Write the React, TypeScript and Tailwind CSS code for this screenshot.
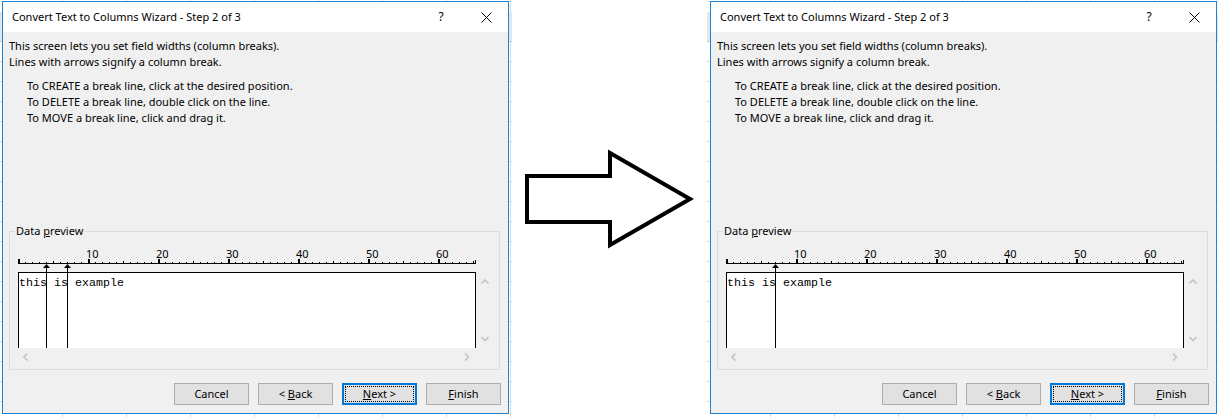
import React from "react";

const UI = "font-['Segoe_UI','Noto_Sans',sans-serif]";
const MONO = "font-['Courier_New','Liberation_Mono',monospace]";

// light spreadsheet grid peeking out around each dialog screenshot
const GRID_LEFT =
  "bg-[image:linear-gradient(to_bottom,transparent_12px,#e6e6e6_12px,#e6e6e6_41px,#c8c8c8_41px,#c8c8c8_42px,transparent_42px),repeating-linear-gradient(to_bottom,transparent_0px,transparent_1px,#d9d9d9_1px,#d9d9d9_2px,transparent_2px,transparent_20px),repeating-linear-gradient(to_right,transparent_0px,transparent_62px,#d9d9d9_62px,#d9d9d9_63px,transparent_63px,transparent_64px)]";
const GRID_RIGHT =
  "bg-[image:linear-gradient(to_bottom,transparent_12px,#e6e6e6_12px,#e6e6e6_41px,#c8c8c8_41px,#c8c8c8_42px,transparent_42px),repeating-linear-gradient(to_bottom,transparent_0px,transparent_1px,#d9d9d9_1px,#d9d9d9_2px,transparent_2px,transparent_20px),repeating-linear-gradient(to_right,transparent_0px,transparent_63px,#d9d9d9_63px,#d9d9d9_64px)]";

const CHAR_W = 7;
const RULER_CHARS = 65;

function Chevron({ dir }: { dir: "left" | "right" | "up" | "down" }) {
  const pts = {
    left: "4.5,0.5 1,4 4.5,7.5",
    right: "1,0.5 4.5,4 1,7.5",
    up: "0.5,4.5 4,1 7.5,4.5",
    down: "0.5,1 4,4.5 7.5,1",
  }[dir];
  const horiz = dir === "left" || dir === "right";
  return (
    <svg width={horiz ? 6 : 8} height={horiz ? 8 : 6} className="block">
      <polyline points={pts} fill="none" stroke="#c4c4c4" strokeWidth="1.6" />
    </svg>
  );
}

function Ruler({ breaks }: { breaks: number[] }) {
  const ticks = [];
  for (let i = 0; i <= RULER_CHARS; i++) {
    const x = i * CHAR_W;
    if (i % 10 === 0) ticks.push(<rect key={i} x={x} y={27} width={2} height={4} fill="#000" />);
    else if (i % 5 === 0) ticks.push(<rect key={i} x={x} y={29} width={1} height={2} fill="#000" />);
    else ticks.push(<rect key={i} x={x} y={30} width={1} height={1} fill="#000" />);
  }
  return (
    <svg width={460} height={40} className="ml-[8px] block">
      <rect x={0} y={31} width={458} height={1} fill="#000" />
      {ticks}
      <rect x={457} y={28} width={1} height={3} fill="#000" />
      {[10, 20, 30, 40, 50, 60].map((n) => (
        <text
          key={n}
          x={n * CHAR_W - 2}
          y={26}
          fontSize="11"
          fontFamily="'Segoe UI','Noto Sans',sans-serif"
          fill="#000"
        >
          {n}
        </text>
      ))}
      {breaks.map((b) => (
        <g key={b}>
          <polygon points={`${b * CHAR_W + 0.5},32 ${b * CHAR_W + 4},36 ${b * CHAR_W - 3},36`} fill="#000" />
          <rect x={b * CHAR_W} y={36} width={1} height={4} fill="#000" />
        </g>
      ))}
    </svg>
  );
}

function Button({ children, focused }: { children: React.ReactNode; focused?: boolean }) {
  if (focused) {
    return (
      <div className="relative flex h-[22px] w-[75px] items-center justify-center border-2 border-[#0078d7] bg-[#e1e1e1] text-[11px]">
        <div className="absolute inset-[1px] border border-dotted border-black" />
        <span>{children}</span>
      </div>
    );
  }
  return (
    <div className="flex h-[22px] w-[75px] items-center justify-center border border-[#adadad] bg-[#e1e1e1] text-[11px]">
      {children}
    </div>
  );
}

function Dialog({ breaks }: { breaks: number[] }) {
  return (
    <div className={`flex h-[413px] w-[507px] flex-col border border-[#1e84d6] bg-[#f0f0f0] text-black ${UI}`}>
      {/* Title bar */}
      <div className="flex h-[30px] shrink-0 items-center bg-white pl-[9px] pr-[12px] text-[11px]">
        <span>Convert Text to Columns Wizard - Step 2 of 3</span>
        <span className="ml-auto w-[20px] text-center text-[12px]">?</span>
        <span className="ml-[25px] flex w-[20px] justify-center">
          <svg width="11" height="11" className="block">
            <path d="M0.5 0.5 L10.5 10.5 M10.5 0.5 L0.5 10.5" stroke="#000" strokeWidth="1" />
          </svg>
        </span>
      </div>

      {/* Instructions */}
      <div className="mt-[6px] pl-[6px] text-[11px] leading-[16px]">
        <p>This screen lets you set field widths (column breaks).</p>
        <p>Lines with arrows signify a column break.</p>
        <div className="mt-[8px] pl-[18px]">
          <p>To CREATE a break line, click at the desired position.</p>
          <p>To DELETE a break line, double click on the line.</p>
          <p>To MOVE a break line, click and drag it.</p>
        </div>
      </div>

      {/* Data preview group */}
      <div className="relative ml-[6px] mt-[105px] h-[139px] w-[491px] shrink-0 border border-[#dcdcdc]">
        <span className="absolute left-[5px] top-[-9px] bg-[#f0f0f0] px-[1px] text-[11px] leading-[16px]">
          Data <span className="underline">p</span>review
        </span>
        <Ruler breaks={breaks} />
        <div className="flex">
          <div className="relative ml-[8px] h-[76px] w-[458px] border-x border-t border-black bg-white">
            <div className={`pt-[3px] text-[11.67px] leading-[14px] whitespace-pre ${MONO}`}>this is example</div>
            {breaks.map((b) => (
              <div key={b} className="absolute bottom-0 top-[-1px] w-px bg-black" style={{ left: b * CHAR_W - 1 }} />
            ))}
          </div>
          <div className="flex h-[76px] w-[17px] flex-col items-center justify-between pb-[6px] pt-[7px]">
            <Chevron dir="up" />
            <Chevron dir="down" />
          </div>
        </div>
        <div className="ml-[8px] flex h-[17px] w-[458px] items-center justify-between pl-[5px] pr-[6px]">
          <Chevron dir="left" />
          <Chevron dir="right" />
        </div>
      </div>

      {/* Buttons */}
      <div className="mt-[13px] flex justify-end gap-[9px] pr-[7px]">
        <Button>Cancel</Button>
        <Button>
          &lt;&nbsp;<span className="underline">B</span>ack
        </Button>
        <Button focused>
          <span className="underline">N</span>ext&nbsp;&gt;
        </Button>
        <Button>
          <span className="underline">F</span>inish
        </Button>
      </div>
    </div>
  );
}

export default function App() {
  return (
    <div className="flex h-[417px] w-[1218px] overflow-hidden bg-white">
      <div className={`h-[417px] w-[512px] shrink-0 pl-[2px] pt-[1px] ${GRID_LEFT}`}>
        <Dialog breaks={[4, 7]} />
      </div>
      <div className="h-[417px] w-[195px] shrink-0">
        <svg width="195" height="417" className="block">
          <polygon
            points="15,176 98,176 98,153 178,199 98,245 98,222 15,222"
            fill="#fff"
            stroke="#000"
            strokeWidth="4"
            strokeLinejoin="miter"
          />
        </svg>
      </div>
      <div className={`h-[417px] w-[511px] shrink-0 pl-[3px] pt-[1px] ${GRID_RIGHT}`}>
        <Dialog breaks={[7]} />
      </div>
    </div>
  );
}
